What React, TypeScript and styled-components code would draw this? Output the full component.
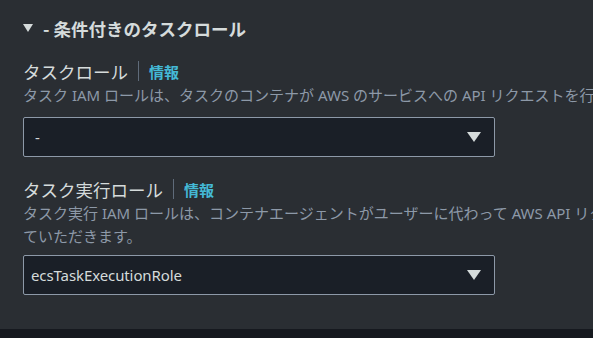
import styled, { createGlobalStyle } from 'styled-components'

const GlobalStyle = createGlobalStyle`
  html, body {
    margin: 0;
    padding: 0;
    background: #16191f;
    overflow: hidden;
  }
  body {
    font-family: 'Noto Sans', 'Noto Sans CJK JP', sans-serif;
  }
`

const colors = {
  panel: '#2a2e33',
  field: '#1a1f27',
  border: '#8d99a8',
  text: '#d5dbdb',
  muted: '#8d99a8',
  link: '#44b9d6',
  page: '#16191f',
}

const Page = styled.div`
  width: 593px;
  height: 338px;
  background: ${colors.page};
  overflow: hidden;
`

const Panel = styled.section`
  width: 700px;
  height: 329px;
  box-sizing: border-box;
  background: ${colors.panel};
  padding: 15px 0 0 23px;
`

const SectionHeader = styled.h3`
  display: flex;
  align-items: center;
  gap: 10px;
  margin: 0 0 17px;
  height: 26px;
  font-size: 17.5px;
  font-weight: 700;
  color: ${colors.text};
  font-family: 'Noto Sans CJK JP', sans-serif;
`

const Caret = styled.span<{ $size: number }>`
  display: inline-block;
  width: 0;
  height: 0;
  border-left: ${(p) => p.$size / 2}px solid transparent;
  border-right: ${(p) => p.$size / 2}px solid transparent;
  border-top: ${(p) => p.$size * 0.78}px solid ${colors.text};
`

const Field = styled.div`
  display: flex;
  flex-direction: column;
  margin-bottom: 19px;
`

const LabelRow = styled.div`
  display: flex;
  align-items: center;
  height: 26px;
`

const Label = styled.label`
  font-family: 'Noto Sans CJK JP', sans-serif;
  font-size: 17.5px;
  color: ${colors.text};
`

const Divider = styled.span`
  width: 1px;
  height: 20px;
  background: #5f6b7a;
  margin: 0 10px 0 10px;
`

const InfoLink = styled.a`
  font-family: 'Noto Sans CJK JP', sans-serif;
  font-size: 15px;
  font-weight: 700;
  color: ${colors.link};
  text-decoration: none;
`

const Description = styled.p<{ $after?: number }>`
  margin: 0 0 ${(p) => p.$after ?? 10}px;
  font-family: 'Noto Sans', 'Noto Sans CJK JP', sans-serif;
  font-size: 15px;
  line-height: 23px;
  color: ${colors.muted};
  white-space: nowrap;
`

const SelectBox = styled.div<{ $tight?: boolean }>`
  width: 472px;
  height: 40px;
  box-sizing: border-box;
  display: flex;
  align-items: center;
  justify-content: space-between;
  padding: 0 13px 0 ${(p) => (p.$tight ? 7 : 11)}px;
  background: ${colors.field};
  border: 1px solid ${colors.border};
  border-radius: 2px;
  color: ${colors.text};
  font-size: 15px;
  letter-spacing: -0.1px;
`

function App() {
  return (
    <Page>
      <GlobalStyle />
      <Panel>
        <SectionHeader>
          <Caret $size={11} />
          <span>- 条件付きのタスクロール</span>
        </SectionHeader>

        <Field>
          <LabelRow>
            <Label>タスクロール</Label>
            <Divider />
            <InfoLink>情報</InfoLink>
          </LabelRow>
          <Description>
            タスク IAM ロールは、タスクのコンテナが AWS のサービスへの API リクエストを行うために使用するアクセス許可を付与します。
          </Description>
          <SelectBox>
            <span>-</span>
            <Caret $size={14} />
          </SelectBox>
        </Field>

        <Field>
          <LabelRow>
            <Label>タスク実行ロール</Label>
            <Divider />
            <InfoLink>情報</InfoLink>
          </LabelRow>
          <Description $after={7}>
            タスク実行 IAM ロールは、コンテナエージェントがユーザーに代わって AWS API リクエストを行うために使用されます。まだない場合は、作成させ
            <br />
            ていただきます。
          </Description>
          <SelectBox $tight>
            <span>ecsTaskExecutionRole</span>
            <Caret $size={14} />
          </SelectBox>
        </Field>
      </Panel>
    </Page>
  )
}

export default App
